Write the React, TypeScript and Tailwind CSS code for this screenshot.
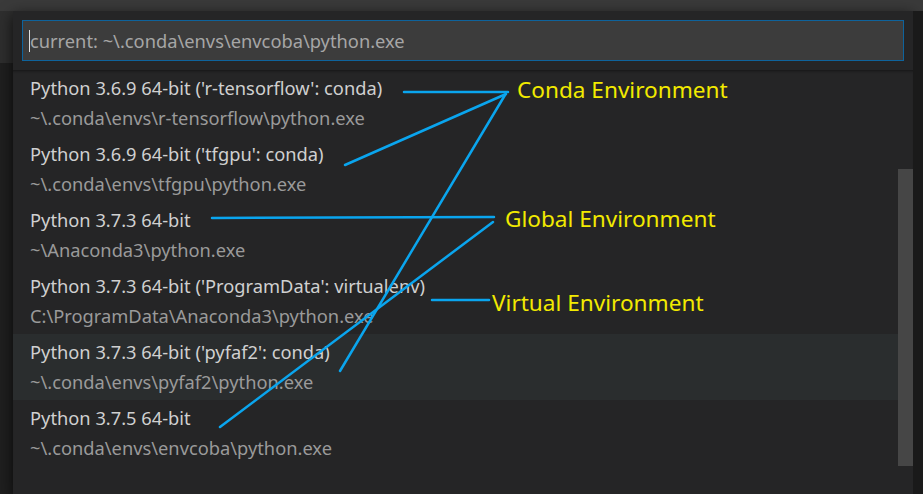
const rows = [
  { title: "Python 3.6.9 64-bit ('r-tensorflow': conda)", path: "~\\.conda\\envs\\r-tensorflow\\python.exe" },
  { title: "Python 3.6.9 64-bit ('tfgpu': conda)", path: "~\\.conda\\envs\\tfgpu\\python.exe" },
  { title: "Python 3.7.3 64-bit", path: "~\\Anaconda3\\python.exe" },
  { title: "Python 3.7.3 64-bit ('ProgramData': virtualenv)", path: "C:\\ProgramData\\Anaconda3\\python.exe" },
  { title: "Python 3.7.3 64-bit ('pyfaf2': conda)", path: "~\\.conda\\envs\\pyfaf2\\python.exe", hover: true },
  { title: "Python 3.7.5 64-bit", path: "~\\.conda\\envs\\envcoba\\python.exe" },
];

const Row = ({ title, path, hover }: { title: string; path: string; hover?: boolean }) => (
  <div className={`h-[66px] pt-[3px] pl-[17px] ${hover ? "bg-[#2a2d2e]" : ""}`}>
    <div className="leading-[30px] text-[18.3px] text-[#d0d0d0] whitespace-nowrap">{title}</div>
    <div className="leading-[30px] text-[18.3px] text-[#9a9a9a] whitespace-nowrap">{path}</div>
  </div>
);

export default function App() {
  return (
    <div
      className="relative w-[923px] h-[494px] overflow-hidden bg-[#1e1e1e]"
      style={{ fontFamily: '"Noto Sans", "Open Sans", sans-serif' }}
    >
      <div className="h-[11px] bg-[#3a3a3a]" />
      <div className="flex">
        <div className="w-[13px] flex flex-col">
          <div className="h-[52px] bg-[#2e2e2e]" />
          <div className="flex-1 bg-[#1f1f1f]" />
        </div>
        <div className="w-[900px] bg-[#252526] shadow-[0_4px_14px_rgba(0,0,0,0.7)]">
          <div className="p-[9px] h-[59px]">
            <div className="h-[41px] w-[882px] bg-[#3c3c3c] border border-[#0e639c] flex items-center pl-[6px]">
              <span className="w-px h-[22px] bg-[#e0e0e0]" />
              <span className="text-[18.3px] text-[#a6a6a6] whitespace-nowrap">current: ~\.conda\envs\envcoba\python.exe</span>
            </div>
          </div>
          <div className="flex shadow-[inset_0_3px_3px_-2px_rgba(0,0,0,0.45)]">
            <div className="flex-1">
              {rows.map((r) => (
                <Row key={r.title} {...r} />
              ))}
            </div>
            <div className="w-[15px] flex flex-col">
              <div className="h-[99px]" />
              <div className="flex-1 bg-[#464646]" />
            </div>
          </div>
          <div className="h-[9px]" />
        </div>
        <div className="w-[10px] bg-[#1a1a1a] h-[483px]" />
      </div>

      <svg className="absolute inset-0 pointer-events-none" width="923" height="494">
        <g stroke="#0aa5ee" strokeWidth="2.5" strokeLinecap="round" fill="none">
          <line x1="404" y1="92" x2="508" y2="92" />
          <line x1="345" y1="165" x2="506" y2="94" />
          <line x1="340" y1="371" x2="505" y2="95" />
          <line x1="212" y1="218" x2="494" y2="217" />
          <line x1="220" y1="427" x2="493" y2="222" />
          <line x1="432" y1="300" x2="489" y2="300" />
        </g>
      </svg>
      <div className="absolute left-[517px] top-[75px] text-[22.6px] leading-[30px] text-[#f2ea00] whitespace-nowrap">
        Conda Environment
      </div>
      <div className="absolute left-[505px] top-[204px] text-[22.6px] leading-[30px] text-[#f2ea00] whitespace-nowrap">
        Global Environment
      </div>
      <div className="absolute left-[492px] top-[288px] text-[22.6px] leading-[30px] text-[#f2ea00] whitespace-nowrap">
        Virtual Environment
      </div>
    </div>
  );
}
